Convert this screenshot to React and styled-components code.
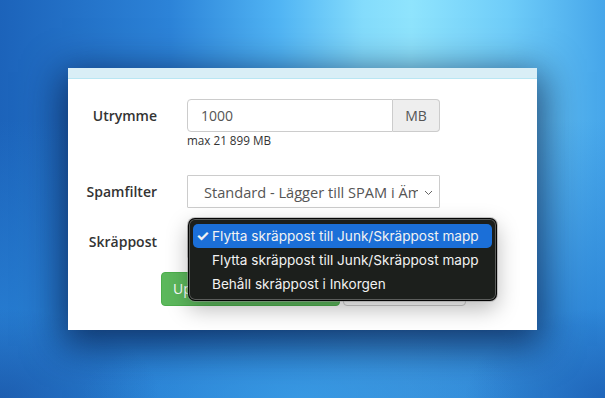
import React from "react";
import styled, { createGlobalStyle } from "styled-components";

const Global = createGlobalStyle`
  html, body { margin: 0; padding: 0; }
  body { width: 605px; height: 398px; overflow: hidden; font-family: "Open Sans", "Liberation Sans", sans-serif; }
`;

const Page = styled.div`
  width: 605px;
  height: 398px;
  box-sizing: border-box;
  padding: 68px 0 0 68px;
  background:
    radial-gradient(ellipse 160px 90px at 0px 398px, rgba(22, 70, 150, 0.55), transparent),
    radial-gradient(ellipse 140px 90px at 605px 398px, rgba(22, 80, 165, 0.6), transparent),
    radial-gradient(ellipse 220px 80px at 300px 398px, rgba(60, 160, 232, 0.7), transparent),
    linear-gradient(180deg, rgba(40, 128, 212, 0) 30%, rgba(40, 128, 212, 0.85) 82%),
    linear-gradient(90deg, #1c63ba 0%, #2c83d8 28%, #50b4f4 46%, #84dcfc 60%, #8fe4fd 68%, #6fcdf9 84%, #46a6ea 100%);
`;

const Card = styled.div`
  position: relative;
  width: 469px;
  height: 262px;
  background: #fff;
  box-shadow: 0 10px 36px 6px rgba(6, 22, 62, 0.7);
`;

const Strip = styled.div`
  height: 10px;
  background: #d9eef6;
  border-bottom: 1px solid #b9e6f3;
`;

const Form = styled.div`
  display: flex;
  flex-direction: column;
  padding-top: 20px;
`;

const Row = styled.div`
  display: grid;
  grid-template-columns: 89px 253px;
  column-gap: 30px;
  align-items: start;
  margin-top: ${(p) => p.$mt || 0}px;
`;

const Label = styled.div`
  text-align: right;
  font-weight: 600;
  font-size: 14px;
  color: #333;
  line-height: 33px;
  height: 33px;
`;

const Field = styled.div`
  display: flex;
  flex-direction: column;
`;

const InputGroup = styled.div`
  display: flex;
  height: 33px;
`;

const Input = styled.div`
  flex: 1;
  box-sizing: border-box;
  border: 1px solid #ccc;
  border-radius: 4px 0 0 4px;
  padding-left: 13px;
  font-size: 14px;
  line-height: 31px;
  color: #555;
`;

const Addon = styled.div`
  width: 47px;
  box-sizing: border-box;
  border: 1px solid #ccc;
  border-left: none;
  border-radius: 0 4px 4px 0;
  background: #eee;
  font-size: 14px;
  line-height: 31px;
  color: #555;
  text-align: center;
`;

const Help = styled.div`
  font-size: 11.7px;
  color: #333;
  margin-top: 1px;
  line-height: 15px;
`;

const Select = styled.div`
  position: relative;
  height: 33px;
  box-sizing: border-box;
  border: 1px solid #ccc;
  border-radius: 1px;
  display: flex;
  align-items: center;
  padding: 0 21px 0 16px;
  font-size: 14.6px;
  color: #555;
`;

const SelectText = styled.span`
  white-space: nowrap;
  overflow: hidden;
  flex: 1;
`;

const Chevron = styled.svg`
  position: absolute;
  right: 6px;
  top: 14px;
`;

const Buttons = styled.div`
  display: flex;
  gap: 3px;
  margin: 14px 0 0 93px;
`;

const Button = styled.div`
  box-sizing: border-box;
  width: ${(p) => p.$w}px;
  height: 34px;
  border-radius: 4px;
  border: 1px solid ${(p) => (p.$primary ? "#4cae4c" : "#ccc")};
  background: ${(p) => (p.$primary ? "#5cb85c" : "#fff")};
  color: ${(p) => (p.$primary ? "#fff" : "#333")};
  font-size: 14px;
  line-height: 32px;
  padding-left: 11px;
`;

const Menu = styled.div`
  position: absolute;
  left: 120px;
  top: 150px;
  width: 309px;
  height: 83px;
  box-sizing: border-box;
  padding: 5px 4px;
  background: #1c1f1c;
  border-radius: 7px;
  border: 1px solid rgba(0, 0, 0, 0.85);
  box-shadow: 0 0 0 1px rgba(150, 150, 150, 0.5), inset 0 0 0 1px rgba(255, 255, 255, 0.28), 0 8px 22px rgba(0, 0, 0, 0.28);
  font-family: Inter, "Liberation Sans", sans-serif;
`;

const Item = styled.div`
  position: relative;
  height: 24px;
  line-height: 24px;
  border-radius: 5px;
  padding-left: 19px;
  font-size: 13.6px;
  color: #f2f2f2;
  background: ${(p) => (p.$active ? "#1b6fd8" : "transparent")};
`;

const Check = styled.span`
  position: absolute;
  left: 3px;
  top: 0;
  font-size: 15px;
  font-weight: 700;
`;

export default function App() {
  return (
    <>
      <Global />
      <Page>
        <Card>
          <Strip />
          <Form>
            <Row>
              <Label>Utrymme</Label>
              <Field>
                <InputGroup>
                  <Input>1000</Input>
                  <Addon>MB</Addon>
                </InputGroup>
                <Help>max 21 899 MB</Help>
              </Field>
            </Row>
            <Row $mt={27}>
              <Label>Spamfilter</Label>
              <Select>
                <SelectText>Standard - Lägger till SPAM i Ämnesraden</SelectText>
                <Chevron width="9" height="6" viewBox="0 0 9 6">
                  <path d="M1 1l3.5 3.5L8 1" fill="none" stroke="#666" strokeWidth="1" />
                </Chevron>
              </Select>
            </Row>
            <Row $mt={17}>
              <Label>Skräppost</Label>
              <Select>
                <SelectText>Flytta skräppost till Junk/Skräppost mapp</SelectText>
              </Select>
            </Row>
            <Buttons>
              <Button $primary $w={179}>Uppdatera</Button>
              <Button $w={123}>Avbryt</Button>
            </Buttons>
          </Form>
          <Menu>
            <Item $active>
              <Check>✓</Check>
              Flytta skräppost till Junk/Skräppost mapp
            </Item>
            <Item>Flytta skräppost till Junk/Skräppost mapp</Item>
            <Item>Behåll skräppost i Inkorgen</Item>
          </Menu>
        </Card>
      </Page>
    </>
  );
}
